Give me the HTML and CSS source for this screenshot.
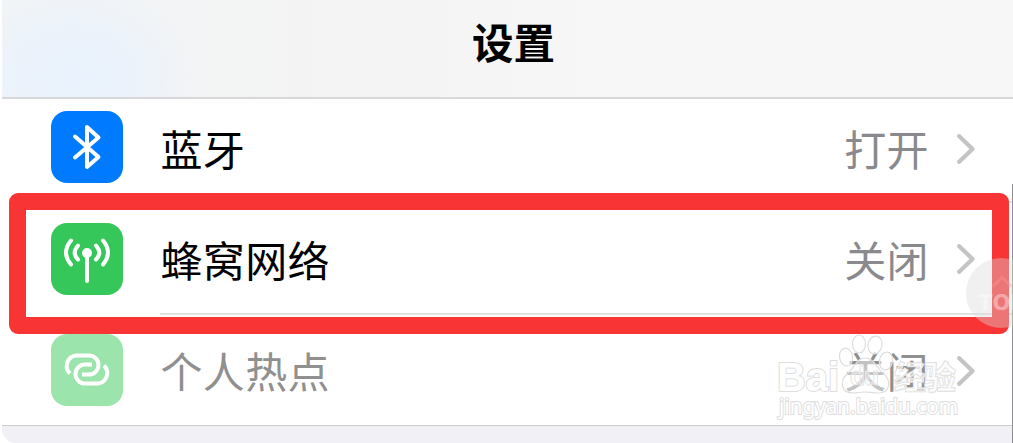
FILE: index.html
```
<!DOCTYPE html>
<html lang="zh-CN">
<head>
    <meta charset="UTF-8">
    <meta name="viewport" content="width=device-width, initial-scale=1.0">
    <title>设置</title>
    <link rel="stylesheet" href="styles.css">
</head>
<body>
    <div class="screen">
        <header class="header">
            <h1>设置</h1>
        </header>
        <ul class="list">
            <li class="row first">
                <svg class="icon bluetooth" viewBox="0 0 72 72">
                    <path d="M24 25.5 L47.5 46 L36 56 V16 L47.5 26.5 L24 46.5"/>
                </svg>
                <div class="content">
                    <span class="label">蓝牙</span>
                    <span class="value">打开</span>
                    <svg class="chevron" viewBox="0 0 18 30"><path d="M2.2 2.2 L15.5 15 L2.2 27.8"/></svg>
                </div>
            </li>
            <li class="row">
                <svg class="icon cellular" viewBox="0 0 72 72">
                    <path d="M36 30 V58"/>
                    <path d="M27 22.5 Q20.5 30 27 36.5 M45 22.5 Q51.5 30 45 36.5"/>
                    <path d="M20 17.5 Q10 29.5 20 41.5 M52 17.5 Q62 29.5 52 41.5"/>
                    <circle cx="36" cy="30" r="5"/>
                </svg>
                <div class="content">
                    <span class="label">蜂窝网络</span>
                    <span class="value">关闭</span>
                    <svg class="chevron" viewBox="0 0 18 30"><path d="M2.2 2.2 L15.5 15 L2.2 27.8"/></svg>
                </div>
            </li>
            <li class="row disabled">
                <svg class="icon hotspot" viewBox="0 0 72 72">
                    <path d="M19 39.5 A10.5 10.5 0 0 1 25 21.5 H38 A9.5 9.5 0 0 1 38 40.5 H31"/>
                    <path d="M53 31.5 A10.5 10.5 0 0 1 47 49.5 H34 A9.5 9.5 0 0 1 34 30.5 H41"/>
                </svg>
                <div class="content">
                    <span class="label">个人热点</span>
                    <span class="value">关闭</span>
                    <svg class="chevron" viewBox="0 0 18 30"><path d="M2.2 2.2 L15.5 15 L2.2 27.8"/></svg>
                </div>
            </li>
        </ul>
    </div>

    <div class="edge"></div>
    <div class="highlight"></div>

    <div class="to-top">
        <svg viewBox="0 0 22 12"><path d="M1.5 10.5 L11 1.5 L20.5 10.5"/></svg>
        <span>TOP</span>
    </div>

    <svg class="watermark" viewBox="0 0 190 90">
        <g class="paw">
            <ellipse cx="76" cy="27" rx="6.5" ry="9" transform="rotate(-8 76 27)"/>
            <ellipse cx="89" cy="14" rx="6.5" ry="9"/>
            <ellipse cx="105" cy="15" rx="7" ry="9" transform="rotate(12 105 15)"/>
            <ellipse cx="116" cy="31" rx="6.5" ry="9" transform="rotate(12 116 31)"/>
            <path d="M95 28 C104 28 105 36 113 43 C123 52 119 63 108 63 C102 63 100 62 95 62 C90 62 88 63 83 63 C71 63 69 51 78 43 C86 36 87 28 95 28 Z"/>
        </g>
        <text class="brand" x="7" y="61" textLength="62" lengthAdjust="spacingAndGlyphs">Bai</text>
        <text class="brand du" x="80" y="55" textLength="29">du</text>
        <text class="brand cjk" x="124" y="59" textLength="62">经验</text>
        <text class="site" x="9" y="84" textLength="179" lengthAdjust="spacingAndGlyphs">jingyan.baidu.com</text>
    </svg>
</body>
</html>
```
FILE: styles.css
```
* {
    box-sizing: border-box;
}
body {
    margin: 0;
    background-color: #ffffff;
    font-family: "Noto Sans CJK SC", sans-serif;
    overflow: hidden;
}
.screen {
    height: 443px;
    margin-left: 2px;
    background-color: #f1f0f7;
    border-bottom-left-radius: 14px;
    overflow: hidden;
}
.header {
    display: flex;
    justify-content: center;
    height: 99px;
    padding-left: 12px;
    background: radial-gradient(ellipse 125px 95px at 72px 75px, #e9f2fd 0%, rgba(235, 242, 251, 0.85) 50%, rgba(243, 243, 244, 0) 100%),
                linear-gradient(90deg, #f1f4f6, #f3f3f3 30%, #f7f7f7 60%);
    border-bottom: 2px solid #d8d8da;
}
h1 {
    margin: 11px 0 0;
    font-size: 41.5px;
    line-height: 60px;
    font-weight: 700;
    color: #000000;
}
.list {
    margin: 0;
    padding: 0;
    list-style: none;
    background-color: #ffffff;
    border-bottom: 1px solid #cbcbcd;
}
.row {
    display: flex;
    height: 111.5px;
    padding-left: 49.4px;
}
.row.first {
    height: 104px;
}
.row.first .icon {
    margin-top: 12.4px;
}
.icon {
    width: 72px;
    height: 72px;
    margin-top: 20px;
    border-radius: 16px;
    flex-shrink: 0;
    fill: none;
    stroke: #ffffff;
    stroke-width: 4;
    stroke-linecap: round;
    stroke-linejoin: round;
}
.bluetooth {
    background-color: #007aff;
}
.cellular {
    background-color: #35c759;
}
.cellular circle {
    fill: #ffffff;
    stroke: none;
}
.hotspot {
    margin-top: 19px;
    background-color: #9be4ac;
    stroke-linecap: butt;
}
.content {
    display: flex;
    flex: 1;
    align-items: center;
    margin-left: 37px;
    padding: 0 38px 0 0;
    border-bottom: 2px solid #e3e3e5;
    font-size: 42px;
    line-height: 60px;
    letter-spacing: 0.4px;
}
.label,
.value {
    margin-top: 2px;
}
.label {
    flex: 1;
    color: #000000;
}
.value {
    color: #8a8a8e;
}
.chevron {
    width: 18px;
    height: 30px;
    margin: 2px 0 0 28px;
    fill: none;
    stroke: #c4c4c7;
    stroke-width: 4.2;
    stroke-linecap: round;
    stroke-linejoin: round;
}
.row.first .content {
    padding-bottom: 5px;
}
.row.first .label,
.row.first .value {
    margin-top: 0;
}
.disabled {
    height: 110.5px;
}
.disabled .content {
    border-bottom: none;
}
.disabled .label,
.disabled .value {
    margin-top: 0;
    color: #909090;
}
.edge {
    position: absolute;
    top: 184px;
    right: 0;
    width: 1px;
    height: 259px;
    background-color: #8e8e90;
}
/* red frame around the cellular row */
.highlight {
    position: absolute;
    left: 9px;
    top: 192.5px;
    width: 1000px;
    height: 141px;
    border: 17px solid #f93434;
    border-radius: 9px;
}
.to-top {
    position: absolute;
    left: 966px;
    top: 258px;
    display: flex;
    flex-direction: column;
    align-items: center;
    width: 70px;
    height: 70px;
    padding: 18px 0 0 2px;
    border-radius: 50%;
    background-color: rgba(218, 218, 218, 0.4);
    color: rgba(255, 255, 255, 0.4);
    font: bold 21px/30px "DejaVu Sans", sans-serif;
}
.to-top svg {
    width: 22px;
    height: 12px;
    fill: none;
    stroke: rgba(255, 150, 150, 0.4);
    stroke-width: 3;
}
.watermark {
    position: absolute;
    left: 770px;
    top: 330px;
    width: 190px;
    height: 90px;
    fill: rgba(255, 255, 255, 0.45);
    stroke: #dedede;
    stroke-width: 1.2;
}
.watermark text {
    font-family: "Liberation Sans", sans-serif;
    paint-order: stroke;
    stroke-width: 2;
    fill: #ffffff;
}
.watermark .brand {
    font-size: 41px;
    font-weight: bold;
}
.watermark .du {
    font-size: 25px;
    fill: rgba(255, 255, 255, 0.4);
    stroke-width: 1;
}
.watermark .cjk {
    font-family: "Noto Sans CJK SC", sans-serif;
    font-size: 32px;
    fill: rgba(255, 255, 255, 0.6);
    stroke-width: 1.4;
}
.watermark .site {
    font-family: "Noto Sans", sans-serif;
    font-size: 21px;
}
```
